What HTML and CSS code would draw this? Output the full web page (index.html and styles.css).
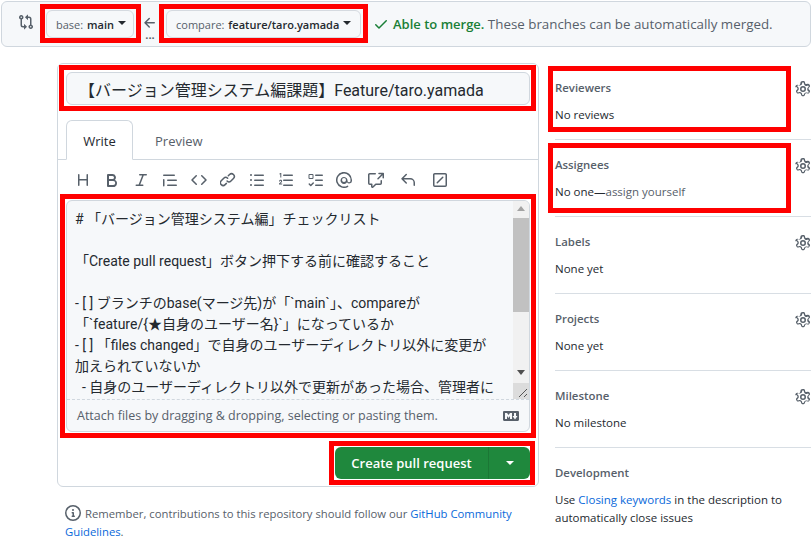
FILE: index.html
```html
<!doctype html>
<html>
<head>
  <meta charset="utf-8">
  <title>Open a pull request</title>
  <link rel="stylesheet" href="styles.css">
</head>
<body>

  <div class="range-bar">
    <svg class="icon range-icon" viewBox="0 0 16 16" width="16" height="16"><path d="M9.573.677A.25.25 0 0 1 10 .854V2.5h1A2.5 2.5 0 0 1 13.5 5v5.628a2.251 2.251 0 1 1-1.5 0V5a1 1 0 0 0-1-1h-1v1.646a.25.25 0 0 1-.427.177L7.177 3.427a.25.25 0 0 1 0-.354zM6 12v-1.646a.25.25 0 0 1 .427-.177l2.396 2.396a.25.25 0 0 1 0 .354l-2.396 2.396A.25.25 0 0 1 6 15.146V13.5H5A2.5 2.5 0 0 1 2.5 11V5.372a2.25 2.25 0 1 1 1.5 0V11a1 1 0 0 0 1 1zM4 3.25a.75.75 0 1 0-1.5 0 .75.75 0 0 0 1.5 0zM12.75 12a.75.75 0 1 0 0 1.5.75.75 0 0 0 0-1.5z"/></svg>
    <button class="branch base-branch">base: <b>main</b><span class="caret"></span></button>
    <div class="arrow">
      <svg class="icon" viewBox="0 0 16 16" width="16" height="16"><path d="M7.78 12.53a.75.75 0 0 1-1.06 0L2.47 8.28a.75.75 0 0 1 0-1.06l4.25-4.25a.75.75 0 0 1 1.06 1.06L4.81 7h7.44a.75.75 0 0 1 0 1.5H4.81l2.97 2.97a.75.75 0 0 1 0 1.06z"/></svg>
      <span class="dots">...</span>
    </div>
    <button class="branch compare-branch">compare: <b>feature/taro.yamada</b><span class="caret"></span></button>
    <svg class="check" viewBox="0 0 16 16" width="16" height="16"><path d="M13.78 4.22a.75.75 0 0 1 0 1.06l-7.25 7.25a.75.75 0 0 1-1.06 0L2.22 9.28a.75.75 0 0 1 1.06-1.06L6 10.94l6.72-6.72a.75.75 0 0 1 1.06 0z"/></svg>
    <span class="merge-text"><b>Able to merge.</b> These branches can be automatically merged.</span>
  </div>

  <div class="layout">
    <div class="card">
      <input class="title-input" type="text" value="【バージョン管理システム編課題】Feature/taro.yamada">

      <div class="tabs">
        <div class="tab active">Write</div>
        <div class="tab">Preview</div>
      </div>

      <div class="toolbar">
        <svg class="icon" viewBox="0 0 16 16" width="16" height="16"><path d="M3.75 2a.75.75 0 0 1 .75.75V7h7V2.75a.75.75 0 0 1 1.5 0v10.5a.75.75 0 0 1-1.5 0V8.5h-7v4.75a.75.75 0 0 1-1.5 0V2.75A.75.75 0 0 1 3.75 2z"/></svg>
        <svg class="icon" viewBox="0 0 16 16" width="16" height="16"><path d="M4 2h4.5a3.5 3.5 0 0 1 2.5 5.95A3.75 3.75 0 0 1 9.25 15H4a1 1 0 0 1-1-1V3a1 1 0 0 1 1-1zm1 2v3h3.5a1.5 1.5 0 0 0 0-3H5zm0 5v4h4.25a2 2 0 0 0 0-4H5z"/></svg>
        <svg class="icon" viewBox="0 0 16 16" width="16" height="16"><path d="M6 2.75A.75.75 0 0 1 6.75 2h6.5a.75.75 0 0 1 0 1.5h-2.5l-3.5 9h2.5a.75.75 0 0 1 0 1.5h-6.5a.75.75 0 0 1 0-1.5h2.4l3.5-9H6.75A.75.75 0 0 1 6 2.75z"/></svg>
        <svg class="icon" viewBox="0 0 16 16" width="16" height="16"><path d="M1.75 2.5h10.5a.75.75 0 0 1 0 1.5H1.75a.75.75 0 0 1 0-1.5zm4 5h8.5a.75.75 0 0 1 0 1.5h-8.5a.75.75 0 0 1 0-1.5zm0 5h8.5a.75.75 0 0 1 0 1.5h-8.5a.75.75 0 0 1 0-1.5zM2.5 7.75v6a.75.75 0 0 1-1.5 0v-6a.75.75 0 0 1 1.5 0z"/></svg>
        <svg class="icon" viewBox="0 0 16 16" width="16" height="16"><path d="M4.72 3.22a.75.75 0 0 1 1.06 1.06L2.06 8l3.72 3.72a.75.75 0 1 1-1.06 1.06L.47 8.53a.75.75 0 0 1 0-1.06l4.25-4.25zm6.56 0a.75.75 0 1 0-1.06 1.06L13.94 8l-3.72 3.72a.75.75 0 1 0 1.06 1.06l4.25-4.25a.75.75 0 0 0 0-1.06l-4.25-4.25z"/></svg>
        <svg class="icon" viewBox="0 0 16 16" width="16" height="16"><path d="M7.78 3.28l1.25-1.25a3.5 3.5 0 1 1 4.95 4.95l-2.5 2.5a3.5 3.5 0 0 1-4.95 0 .75.75 0 0 1 1.06-1.06 2 2 0 0 0 2.83 0l2.5-2.5a2 2 0 1 0-2.83-2.83L8.84 4.34a.75.75 0 0 1-1.06-1.06zm-3.5 3.5a2 2 0 0 1 2.83 0 .75.75 0 1 0 1.06-1.06 3.5 3.5 0 0 0-4.95 0l-2.5 2.5a3.5 3.5 0 1 0 4.95 4.95l1.25-1.25a.75.75 0 0 0-1.06-1.06l-1.25 1.25a2 2 0 1 1-2.83-2.83l2.5-2.5z"/></svg>
        <svg class="icon" viewBox="0 0 16 16" width="16" height="16"><path d="M2 4a1 1 0 1 0 0-2 1 1 0 0 0 0 2zm3.75-1.5a.75.75 0 0 0 0 1.5h8.5a.75.75 0 0 0 0-1.5h-8.5zm0 5a.75.75 0 0 0 0 1.5h8.5a.75.75 0 0 0 0-1.5h-8.5zm0 5a.75.75 0 0 0 0 1.5h8.5a.75.75 0 0 0 0-1.5h-8.5zM3 8a1 1 0 1 1-2 0 1 1 0 0 1 2 0zm-1 6a1 1 0 1 0 0-2 1 1 0 0 0 0 2z"/></svg>
        <svg class="icon" viewBox="0 0 16 16" width="16" height="16"><path d="M5 3.25a.75.75 0 0 1 .75-.75h8.5a.75.75 0 0 1 0 1.5h-8.5A.75.75 0 0 1 5 3.25zm0 5a.75.75 0 0 1 .75-.75h8.5a.75.75 0 0 1 0 1.5h-8.5A.75.75 0 0 1 5 8.25zm0 5a.75.75 0 0 1 .75-.75h8.5a.75.75 0 0 1 0 1.5h-8.5a.75.75 0 0 1-.75-.75zM2.6 1h.7v4.5h-1V2.2l-.8.3V1.6L2.6 1zM1 9.4c0-1 .7-1.6 1.6-1.6s1.5.5 1.5 1.4c0 .6-.3 1-.9 1.5l-.9.8h1.9v.9H1v-.8l1.5-1.4c.4-.4.6-.6.6-.9 0-.4-.2-.6-.5-.6-.4 0-.6.3-.6.7H1z"/></svg>
        <svg class="icon" viewBox="0 0 16 16" width="16" height="16"><path d="M2.5 2h3a1 1 0 0 1 1 1v3a1 1 0 0 1-1 1h-3a1 1 0 0 1-1-1V3a1 1 0 0 1 1-1zm0 1v3h3V3h-3zm6.25-.5h6.5a.75.75 0 0 1 0 1.5h-6.5a.75.75 0 0 1 0-1.5zm0 5h6.5a.75.75 0 0 1 0 1.5h-6.5a.75.75 0 0 1 0-1.5zm0 5h6.5a.75.75 0 0 1 0 1.5h-6.5a.75.75 0 0 1 0-1.5zM6.78 10.47a.75.75 0 0 1 0 1.06l-2.5 2.5a.75.75 0 0 1-1.06 0l-1.5-1.5a.75.75 0 0 1 1.06-1.06l.97.97 1.97-1.97a.75.75 0 0 1 1.06 0z"/></svg>
        <svg class="icon" viewBox="0 0 16 16" width="16" height="16"><path d="M8 1.5a6.5 6.5 0 1 0 3.25 12.13.75.75 0 1 1 .75 1.3A8 8 0 1 1 16 8v.75a2.75 2.75 0 0 1-5 1.58A3.5 3.5 0 1 1 11.5 8v.75a1.25 1.25 0 0 0 3 0V8A6.5 6.5 0 0 0 8 1.5zM10 8a2 2 0 1 0-4 0 2 2 0 0 0 4 0z"/></svg>
        <svg class="icon tool-wide" viewBox="0 0 16 16" width="16" height="16"><path d="M1.75 2.5a.25.25 0 0 0-.25.25v8.5c0 .14.11.25.25.25h2a.75.75 0 0 1 .75.75v2.19l2.72-2.72a.75.75 0 0 1 .53-.22h4.5a.25.25 0 0 0 .25-.25v-2.5a.75.75 0 0 1 1.5 0v2.5A1.75 1.75 0 0 1 12.25 13H8.06l-2.57 2.57A1.46 1.46 0 0 1 3 14.54V13H1.75A1.75 1.75 0 0 1 0 11.25v-8.5C0 1.78.78 1 1.75 1h5.5a.75.75 0 0 1 0 1.5h-5.5zM11 .75h4.25a.75.75 0 0 1 .75.75V5.75a.75.75 0 0 1-1.5 0V3.31l-3.97 3.97a.75.75 0 0 1-1.06-1.06l3.97-3.97H11a.75.75 0 0 1 0-1.5z"/></svg>
        <svg class="icon tool-wide" viewBox="0 0 16 16" width="16" height="16"><path d="M6.78 1.97a.75.75 0 0 1 0 1.06L3.81 6h6.44A4.75 4.75 0 0 1 15 10.75v2.5a.75.75 0 0 1-1.5 0v-2.5a3.25 3.25 0 0 0-3.25-3.25H3.81l2.97 2.97a.75.75 0 1 1-1.06 1.06L1.47 7.28a.75.75 0 0 1 0-1.06l4.25-4.25a.75.75 0 0 1 1.06 0z"/></svg>
        <svg class="icon tool-wide" viewBox="0 0 16 16" width="16" height="16"><path d="M2.75 1h10.5C14.22 1 15 1.78 15 2.75v10.5A1.75 1.75 0 0 1 13.25 15H2.75A1.75 1.75 0 0 1 1 13.25V2.75C1 1.78 1.78 1 2.75 1zm0 1.5a.25.25 0 0 0-.25.25v10.5c0 .14.11.25.25.25h10.5a.25.25 0 0 0 .25-.25V2.75a.25.25 0 0 0-.25-.25H2.75zm8.53 2.22a.75.75 0 0 1 0 1.06l-5.5 5.5a.75.75 0 0 1-1.06-1.06l5.5-5.5a.75.75 0 0 1 1.06 0z"/></svg>
      </div>

      <div class="editor">
        <div class="editor-body">
          <div class="editor-text"># 「バージョン管理システム編」チェックリスト

「Create pull request」ボタン押下する前に確認すること

- [ ] ブランチのbase(マージ先)が「`main`」、compareが
「`feature/{★自身のユーザー名}`」になっているか
- [ ] 「files changed」で自身のユーザーディレクトリ以外に変更が
加えられていないか
  - 自身のユーザーディレクトリ以外で更新があった場合、管理者に</div>
          <div class="scrollbar">
            <span class="scroll-up"></span>
            <span class="scroll-thumb"></span>
            <span class="scroll-down"></span>
            <svg class="grip" viewBox="0 0 16 16" width="16" height="16"><path d="M14 6L6 14M14 11l-3 3" fill="none" stroke="#555" stroke-width="1"/></svg>
          </div>
        </div>
        <div class="attach">
          <span>Attach files by dragging &amp; dropping, selecting or pasting them.</span>
          <svg class="icon md-icon" viewBox="0 0 16 16" width="16" height="16"><path d="M14.85 3c.63 0 1.15.52 1.14 1.15v7.7c0 .63-.51 1.15-1.15 1.15H1.15C.52 13 0 12.48 0 11.84V4.15C0 3.52.52 3 1.15 3h13.7zM9 11V5H7L5.5 7 4 5H2v6h2V8l1.5 1.92L7 8v3h2zm2.99.5L14.5 8H13V5h-2v3H9.5l2.49 3.5z"/></svg>
        </div>
      </div>

      <div class="actions">
        <div class="create-group">
          <button class="create-btn">Create pull request</button>
          <button class="create-caret"><span class="caret white"></span></button>
        </div>
      </div>
    </div>

    <div class="sidebar">
      <div class="side-section">
        <div class="side-head">Reviewers <svg class="icon" viewBox="0 0 16 16" width="16" height="16"><use href="#gear"/></svg></div>
        <div class="side-value">No reviews</div>
      </div>
      <div class="side-section">
        <div class="side-head">Assignees <svg class="icon" viewBox="0 0 16 16" width="16" height="16"><use href="#gear"/></svg></div>
        <div class="side-value">No one—<span class="muted">assign yourself</span></div>
      </div>
      <div class="side-section">
        <div class="side-head">Labels <svg class="icon" viewBox="0 0 16 16" width="16" height="16"><use href="#gear"/></svg></div>
        <div class="side-value">None yet</div>
      </div>
      <div class="side-section">
        <div class="side-head">Projects <svg class="icon" viewBox="0 0 16 16" width="16" height="16"><use href="#gear"/></svg></div>
        <div class="side-value">None yet</div>
      </div>
      <div class="side-section">
        <div class="side-head">Milestone <svg class="icon" viewBox="0 0 16 16" width="16" height="16"><use href="#gear"/></svg></div>
        <div class="side-value">No milestone</div>
      </div>
      <div class="side-section">
        <div class="side-head">Development</div>
        <div class="side-value">Use <a href="#">Closing keywords</a> in the description to automatically close issues</div>
      </div>
    </div>

    <div class="remember">
      <svg class="icon" viewBox="0 0 16 16" width="16" height="16"><path d="M0 8a8 8 0 1 1 16 0A8 8 0 0 1 0 8zm8-6.5a6.5 6.5 0 1 0 0 13 6.5 6.5 0 0 0 0-13zM6.5 7.75A.75.75 0 0 1 7.25 7h1a.75.75 0 0 1 .75.75v2.75h.25a.75.75 0 0 1 0 1.5h-2a.75.75 0 0 1 0-1.5h.25v-2h-.25a.75.75 0 0 1-.75-.75zM8 6a1 1 0 1 1 0-2 1 1 0 0 1 0 2z"/></svg>
      Remember, contributions to this repository should follow our <a href="#">GitHub Community Guidelines</a>.
    </div>
  </div>

  <!-- red annotation boxes -->
  <div class="mark mark-base"></div>
  <div class="mark mark-compare"></div>
  <div class="mark mark-title"></div>
  <div class="mark mark-editor"></div>
  <div class="mark mark-create"></div>
  <div class="mark mark-reviewers"></div>
  <div class="mark mark-assignees"></div>

  <svg class="defs" width="0" height="0"><defs><path id="gear" fill-rule="evenodd" d="M8 0a8.2 8.2 0 0 1 .7.03c.6.06 1.05.5 1.2 1.03l.35 1.35c.03.1.1.2.24.27.2.09.4.2.58.31.13.08.26.08.36.06l1.33-.37c.53-.15 1.13.01 1.48.5.27.37.5.77.7 1.2.24.55.1 1.15-.28 1.54l-.98.98c-.08.08-.13.2-.13.35a5 5 0 0 1 0 .68c.01.15.05.27.13.35l.98.98c.38.39.52.99.28 1.54-.2.43-.43.83-.7 1.2-.35.49-.95.65-1.48.5l-1.33-.37c-.1-.02-.23-.02-.36.06-.18.11-.38.22-.58.31a.42.42 0 0 0-.24.27l-.35 1.35c-.15.53-.6.97-1.2 1.03a8.2 8.2 0 0 1-1.4 0c-.6-.06-1.05-.5-1.2-1.03l-.35-1.35a.42.42 0 0 0-.24-.27 5.6 5.6 0 0 1-.58-.31c-.13-.08-.26-.08-.36-.06l-1.33.37c-.53.15-1.13-.01-1.48-.5a7.9 7.9 0 0 1-.7-1.2c-.24-.55-.1-1.15.28-1.54l.98-.98c.08-.08.13-.2.13-.35a5 5 0 0 1 0-.68c-.01-.15-.05-.27-.13-.35l-.98-.98C.24 6.65.1 6.05.34 5.5c.2-.43.43-.83.7-1.2.35-.49.95-.65 1.48-.5l1.33.37c.1.02.23.02.36-.06.18-.11.38-.22.58-.31a.42.42 0 0 0 .24-.27l.35-1.35C5.53.65 5.98.21 6.58.15A8.2 8.2 0 0 1 8 0zm-.56 1.52c-.05.01-.1.05-.12.1L7 3c-.12.5-.48.86-.9 1.07-.15.07-.3.15-.44.24-.4.25-.9.34-1.38.2l-1.33-.37c-.06-.01-.11 0-.14.04-.21.29-.39.6-.54.93-.02.04-.01.1.03.15l.98.98c.35.35.5.82.47 1.28a3.6 3.6 0 0 0 0 .52c.03.46-.12.93-.47 1.28l-.98.98c-.04.05-.05.1-.03.15.15.33.33.64.54.93.03.04.08.05.14.04l1.33-.37c.48-.14.98-.05 1.38.2.14.09.29.17.44.24.42.21.78.57.9 1.07l.32 1.38c.02.05.07.09.12.1a6.5 6.5 0 0 0 1.12 0c.05-.01.1-.05.12-.1L9 13c.12-.5.48-.86.9-1.07.15-.07.3-.15.44-.24.4-.25.9-.34 1.38-.2l1.33.37c.06.01.11 0 .14-.04.21-.29.39-.6.54-.93.02-.04.01-.1-.03-.15l-.98-.98c-.35-.35-.5-.82-.47-1.28a3.6 3.6 0 0 0 0-.52c-.03-.46.12-.93.47-1.28l.98-.98c.04-.05.05-.1.03-.15a6.3 6.3 0 0 0-.54-.93c-.03-.04-.08-.05-.14-.04l-1.33.37c-.48.14-.98.05-1.38-.2a4.6 4.6 0 0 0-.44-.24C9.48 3.86 9.12 3.5 9 3l-.32-1.38c-.02-.05-.07-.09-.12-.1a6.5 6.5 0 0 0-1.12 0zM8 5a3 3 0 1 1 0 6 3 3 0 0 1 0-6zm0 1.5a1.5 1.5 0 1 0 0 3 1.5 1.5 0 0 0 0-3z"/></defs></svg>

</body>
</html>
```

FILE: styles.css
```css
* {
  box-sizing: border-box;
}
body {
  margin: 0;
  width: 812px;
  height: 543px;
  overflow: hidden;
  position: relative;
  background: #fff;
  color: #24292f;
  font-family: "Open Sans", "Noto Sans CJK JP", sans-serif;
  font-size: 12.5px;
}
a {
  color: #0969da;
  text-decoration: none;
}
.icon {
  fill: #57606a;
  flex: none;
  display: block;
}
.defs {
  position: absolute;
}

.range-bar {
  display: flex;
  align-items: center;
  height: 46px;
  margin: 1px 1px 0;
  padding-left: 16px;
  background: #f6f8fa;
  border: 1px solid #d0d7de;
  border-radius: 6px;
}
.range-icon {
  margin-right: 12px;
  margin-top: -4px;
}
.branch {
  display: flex;
  align-items: center;
  height: 28px;
  padding: 0 9px;
  background: #f6f8fa;
  border: 1px solid #d5dae0;
  border-radius: 6px;
  color: #57606a;
  font-family: inherit;
  font-size: 11px;
  white-space: pre;
}
.base-branch {
  width: 88px;
}
.compare-branch {
  width: 195px;
}
.branch b {
  margin-left: 1px;
  color: #24292f;
  font-weight: 600;
}
.caret {
  display: inline-block;
  width: 0;
  height: 0;
  margin-left: 4px;
  margin-top: -2px;
  border-top: 4px solid #24292f;
  border-left: 4px solid transparent;
  border-right: 4px solid transparent;
}
.caret.white {
  margin: 0;
  border-top-color: #fff;
}
.arrow {
  width: 32px;
  display: flex;
  flex-direction: column;
  align-items: center;
  color: #57606a;
}
.arrow .icon {
  margin-top: 5px;
}
.dots {
  font-size: 11px;
  line-height: 8px;
  font-weight: 700;
}
.check {
  fill: #1a7f37;
  margin-left: 12px;
  margin-right: 4px;
}
.merge-text {
  font-size: 13.35px;
  color: #57606a;
}
.merge-text b {
  font-size: 13px;
  color: #1a7f37;
  font-weight: 600;
}

.layout {
  display: grid;
  grid-template-columns: 482px 256px;
  column-gap: 16px;
  align-items: start;
  margin: 16px 0 0 57px;
}
.card {
  height: 424px;
  padding: 8px 8px 0;
  border: 1px solid #d0d7de;
  border-radius: 6px;
}
.title-input {
  display: block;
  width: 100%;
  height: 33px;
  padding: 0 12px;
  background: #f6f8fa;
  border: 1px solid #d0d7de;
  border-radius: 6px;
  color: #24292f;
  font-family: Roboto, "Noto Sans CJK JP", sans-serif;
  font-size: 16px;
}
.tabs {
  display: flex;
  margin: 15px -8px 0;
  padding-left: 8px;
  border-bottom: 1px solid #d0d7de;
}
.tab {
  height: 40px;
  padding: 0 21px;
  line-height: 40px;
  font-size: 13px;
  color: #57606a;
  margin-bottom: -1px;
  border: 1px solid transparent;
}
.tab.active {
  width: 67px;
  padding: 0;
  text-align: center;
  color: #24292f;
  background: #fff;
  border-color: #d0d7de #d0d7de #fff;
  border-radius: 6px 6px 0 0;
}
.toolbar {
  display: flex;
  align-items: center;
  gap: 13px;
  height: 40px;
  padding-left: 9px;
}
.toolbar .icon {
  width: 16px;
  height: 16px;
}
.toolbar .tool-wide {
  margin-left: 3px;
}
.editor {
  height: 232px;
  background: #f6f8fa;
  border: 1px solid #d0d7de;
  border-radius: 6px;
  overflow: hidden;
}
.editor-body {
  display: flex;
  height: 199px;
  border-bottom: 1px dashed #d0d7de;
}
.editor-text {
  flex: 1;
  padding: 8px 8px;
  overflow: hidden;
  white-space: pre-wrap;
  font-family: Roboto, "Noto Sans CJK JP", sans-serif;
  font-size: 14px;
  line-height: 21px;
}
.scrollbar {
  width: 16px;
  display: flex;
  flex-direction: column;
  align-items: center;
  background: #f1f1f1;
  position: relative;
}
.scroll-up, .scroll-down {
  flex: none;
  width: 0;
  height: 0;
  border-left: 4px solid transparent;
  border-right: 4px solid transparent;
}
.scroll-up {
  margin: 5px 0 3px;
  border-bottom: 5px solid #a3a3a3;
}
.scroll-thumb {
  flex: none;
  width: 100%;
  height: 94px;
  margin-top: 4px;
  background: #c1c1c1;
}
.scroll-down {
  margin-top: 58px;
  border-top: 5px solid #505050;
}
.grip {
  position: absolute;
  right: 0;
  bottom: 0;
  background: #dcdcdc;
}
.attach {
  display: flex;
  align-items: center;
  justify-content: space-between;
  height: 31px;
  padding: 0 10px;
  font-size: 12.5px;
  color: #57606a;
}
.actions {
  display: flex;
  justify-content: flex-end;
  margin-top: 15px;
}
.create-group {
  display: flex;
  height: 32px;
  background: #1f883d;
  border-radius: 6px;
}
.create-btn, .create-caret {
  height: 32px;
  background: none;
  border: none;
  color: #fff;
  font-family: inherit;
  font-size: 13px;
  font-weight: 600;
}
.create-btn {
  width: 154px;
  padding-left: 6px;
  border-right: 1px solid #1b7735;
}
.create-caret {
  width: 41px;
  display: flex;
  align-items: center;
  justify-content: center;
}

.sidebar {
  grid-row: span 2;
}
.side-section {
  height: 77px;
  padding-top: 16px;
  border-bottom: 1px solid #d8dee4;
}
.side-section:last-child {
  height: 96px;
}
.side-head {
  display: flex;
  align-items: flex-start;
  justify-content: space-between;
  height: 20px;
  line-height: 18px;
  font-size: 11.4px;
  font-weight: 600;
  color: #57606a;
}
.side-head .icon {
  margin-top: 2px;
}
.side-value {
  margin-top: 7px;
  font-size: 11.5px;
  line-height: 18px;
  color: #24292f;
}
.muted {
  color: #57606a;
}
.remember {
  margin-top: 14px;
  padding-left: 8px;
  font-size: 11.3px;
  line-height: 18px;
  color: #57606a;
}
.remember .icon {
  display: inline-block;
  vertical-align: text-bottom;
  margin-right: 1px;
}

/* red annotation boxes */
.mark {
  position: absolute;
  border: 5px solid #ff0000;
}
.mark-base { left: 40px; top: 4px; width: 101px; height: 39px; }
.mark-compare { left: 159px; top: 4px; width: 209px; height: 39px; }
.mark-title { left: 59px; top: 65px; width: 477px; height: 46px; }
.mark-editor { left: 60px; top: 194px; width: 476px; height: 244px; }
.mark-create { left: 329px; top: 441px; width: 206px; height: 44px; }
.mark-reviewers { left: 548px; top: 66px; width: 243px; height: 66px; }
.mark-assignees { left: 548px; top: 143px; width: 243px; height: 70px; }
```
